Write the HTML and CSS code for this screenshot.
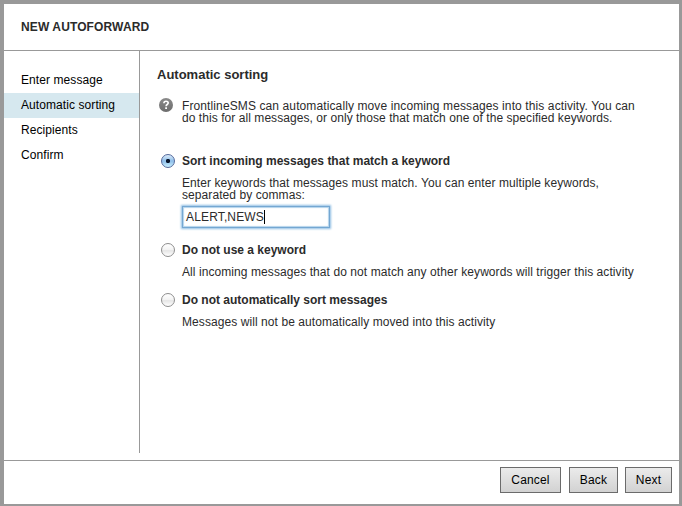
FILE: index.html
```html
<!DOCTYPE html>
<html lang="en">
<head>
<meta charset="utf-8">
<title>New Autoforward</title>
<link rel="stylesheet" href="styles.css">
</head>
<body>
<div class="dialog">
  <header class="title">NEW AUTOFORWARD</header>
  <div class="body">
    <ul class="tabs">
      <li>Enter message</li>
      <li class="active">Automatic sorting</li>
      <li>Recipients</li>
      <li>Confirm</li>
    </ul>
    <main class="content">
      <h2>Automatic sorting</h2>
      <div class="row info">
        <svg class="help" viewBox="0 0 14 14" width="14" height="14">
          <defs><linearGradient id="hg" x1="0" y1="0" x2="0" y2="1"><stop offset="0" stop-color="#8a8a8a"/><stop offset="1" stop-color="#6c6c6c"/></linearGradient></defs>
          <circle cx="7" cy="7" r="7" fill="url(#hg)"/>
          <path d="M4.9 5.3C4.9 3.9 5.8 3.2 7 3.2s2.2.8 2.2 1.9C9.200 6.500 7.100 6.500 7.100 8.200" fill="none" stroke="#fff" stroke-width="1.600"/>
          <rect x="6.200" y="9.300" width="1.800" height="1.700" fill="#fff"/>
        </svg>
        <p class="text"><span class="intro">FrontlineSMS can automatically move incoming messages into this activity. You can</span><br>do this for all messages, or only those that match one of the specified keywords.</p>
      </div>
      <div class="row opt first">
        <span class="radio on"></span>
        <div class="text">
          <strong>Sort incoming messages that match a keyword</strong>
          <p>Enter keywords that messages must match. You can enter multiple keywords,<br>separated by commas:</p>
          <div class="field"><span>ALERT,NEWS</span><i class="caret"></i></div>
        </div>
      </div>
      <div class="row opt second">
        <span class="radio"></span>
        <div class="text">
          <strong>Do not use a keyword</strong>
          <p>All incoming messages that do not match any other keywords will trigger this activity</p>
        </div>
      </div>
      <div class="row opt">
        <span class="radio"></span>
        <div class="text">
          <strong>Do not automatically sort messages</strong>
          <p>Messages will not be automatically moved into this activity</p>
        </div>
      </div>
    </main>
  </div>
  <footer class="actions">
    <button class="cancel">Cancel</button>
    <button class="back">Back</button>
    <button class="next">Next</button>
  </footer>
</div>
</body>
</html>
```
FILE: styles.css
```css
* { box-sizing: border-box; }
body {
  margin: 0;
  font: 12px/12px "Liberation Sans", Arial, sans-serif;
  color: #2b2b2b;
}
.dialog {
  width: 682px;
  height: 506px;
  display: flex;
  flex-direction: column;
  background: #fff;
  border: solid #999;
  border-width: 4px 3px 2px 4px;
}
.title {
  height: 47px;
  padding: 17px 0 0 17px;
  border-bottom: 1px solid #999;
  font-weight: bold;
  letter-spacing: 0.12px;
}
.body { flex: 1; display: flex; }
.tabs {
  list-style: none;
  margin: 0;
  padding: 17px 0 0;
  width: 136px;
  height: 402px;
  border-right: 1px solid #999;
  color: #000;
  letter-spacing: 0.08px;
}
.tabs li { height: 25px; line-height: 25px; padding-left: 17px; white-space: nowrap; }
.tabs .active { background: #d6e8ef; }
.content { flex: 1; padding: 17px 0 0 17px; white-space: nowrap; }
h2 { margin: 0; font-size: 13px; line-height: 14px; }
.row { display: flex; }
.text, .opt p { margin: 0; }
.help { margin-top: -1px; }
.info { margin-top: 17px; padding-left: 2px; letter-spacing: 0.06px; }
.info .text { margin: 1px 0 0 9px; }
.intro { letter-spacing: 0.11px; }
.opt { padding-left: 4px; }
.opt .text { margin-left: 7px; }
.opt strong { display: block; line-height: 14px; }
.opt p { margin-top: 9px; line-height: 12px; letter-spacing: 0.075px; }
.first { margin-top: 30px; }
.second { margin-top: 15px; margin-bottom: 15px; }
.radio {
  width: 14px;
  height: 14px;
  border: 1px solid #8e8e8e;
  border-radius: 50%;
  background: linear-gradient(#fff, #f4f4f4 45%, #e6e6e6 55%, #fff);
}
.radio.on {
  border-color: #53689a;
  background: radial-gradient(circle at 50% 50%, #08152b 0 1.8px, transparent 2.5px), linear-gradient(#dcecfb, #8ebee9 50%, #c9f0ff);
}
.field {
  width: 148px;
  height: 22px;
  margin-top: 5px;
  padding-left: 3px;
  display: flex;
  align-items: center;
  border: 1px solid #74a7d2;
  box-shadow: 0 0 2px 1px #8fbde3, inset 0 0 1px 1px #b3d3ec;
  letter-spacing: 0.15px;
}
.caret { width: 1px; height: 14px; background: #000; }
.actions {
  height: 44px;
  padding: 6px 7px 0 0;
  display: flex;
  justify-content: flex-end;
  border-top: 1px solid #999;
}
button {
  height: 26px;
  padding: 0;
  border: 1px solid #6b6b6b;
  background: linear-gradient(#ebebeb, #d2d2d2);
  font: 12px "Liberation Sans", Arial, sans-serif;
  letter-spacing: 0.15px;
  color: #000;
}
.cancel { width: 61px; margin-right: 8px; }
.back { width: 49px; margin-right: 7px; }
.next { width: 47px; }
```
